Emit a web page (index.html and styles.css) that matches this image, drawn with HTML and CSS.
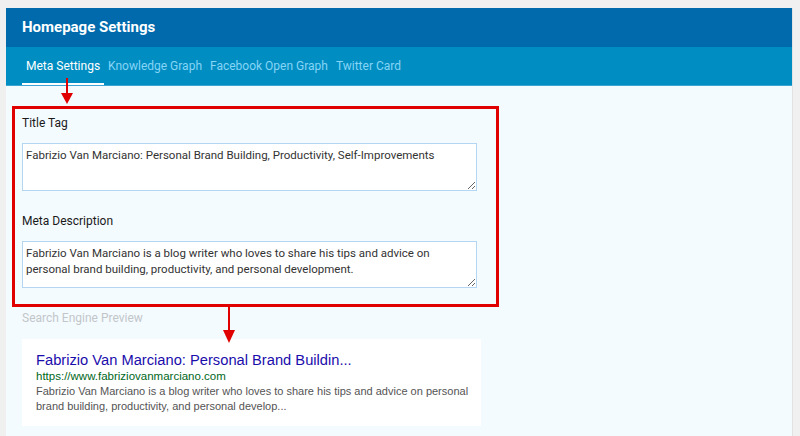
FILE: index.html
```html
<!DOCTYPE html>
<html lang="en">
<head>
    <meta charset="UTF-8">
    <meta name="viewport" content="width=device-width, initial-scale=1.0">
    <title>Homepage Settings</title>
    <link rel="stylesheet" href="styles.css">
</head>
<body>
    <div class="panel">
        <div class="panel-header">Homepage Settings</div>
        <div class="tabs">
            <a class="tab active" href="#">Meta Settings</a>
            <a class="tab" href="#">Knowledge Graph</a>
            <a class="tab" href="#">Facebook Open Graph</a>
            <a class="tab" href="#">Twitter Card</a>
        </div>
        <div class="panel-body">
            <svg class="arrow arrow-tab" width="14" height="28" viewBox="0 0 14 28">
                <line x1="7" y1="0" x2="7" y2="18" stroke="#e00000" stroke-width="2"/>
                <polygon points="1,15 13,15 7,26" fill="#e00000"/>
            </svg>
            <form class="meta-fields">
                <label for="titleTag">Title Tag</label>
                <textarea id="titleTag" class="title-input">Fabrizio Van Marciano: Personal Brand Building, Productivity, Self-Improvements</textarea>
                <label for="metaDesc">Meta Description</label>
                <textarea id="metaDesc" class="desc-input">Fabrizio Van Marciano is a blog writer who loves to share his tips and advice on personal brand building, productivity, and personal development.</textarea>
            </form>
            <svg class="arrow arrow-preview" width="14" height="38" viewBox="0 0 14 38">
                <line x1="7" y1="0" x2="7" y2="28" stroke="#e00000" stroke-width="2"/>
                <polygon points="1,24 13,24 7,37" fill="#e00000"/>
            </svg>
            <div class="preview-label">Search Engine Preview</div>
            <div class="serp">
                <div class="serp-title">Fabrizio Van Marciano: Personal Brand Buildin...</div>
                <div class="serp-url">https://www.fabriziovanmarciano.com</div>
                <div class="serp-desc">Fabrizio Van Marciano is a blog writer who loves to share his tips and advice on personal brand building, productivity, and personal develop...</div>
            </div>
        </div>
    </div>
</body>
</html>
```

FILE: styles.css
```css
body {
    margin: 0;
    padding: 8px 7px 0 6px;
    background-color: #f0f0f0;
    font-family: Roboto, Arial, sans-serif;
    color: #1a1a1a;
    height: 428px;
    overflow: hidden;
}
.panel {
    background-color: #f4fbff;
    height: 100%;
    border-right: 1px solid #e2e2e2;
}
.panel-header {
    background-color: #006aad;
    color: #fff;
    font-size: 15px;
    font-weight: bold;
    height: 39px;
    line-height: 39px;
    padding-left: 16px;
}
.tabs {
    display: flex;
    background-color: #008ec2;
    height: 38px;
    padding-left: 16px;
    border-bottom: 1px solid #3ba4d2;
}
.tab {
    display: block;
    padding: 0 4px;
    font-size: 12px;
    line-height: 39px;
    color: #86d4f6;
    text-decoration: none;
}
.tab.active {
    color: #fff;
    box-shadow: inset 0 -2px 0 #fff;
}
.panel-body {
    position: relative;
    padding: 20px 16px 0;
}
.arrow {
    position: absolute;
}
.arrow-tab {
    left: 54px;
    top: -8px;
}
.arrow-preview {
    left: 216px;
    top: 220px;
}
.meta-fields {
    width: 467px;
    margin-left: -10px;
    padding: 7px 7px 16px;
    border: 3px solid #e00000;
}
label {
    display: block;
    font-size: 12px;
    line-height: 14px;
    margin-bottom: 13px;
}
textarea {
    display: block;
    box-sizing: border-box;
    width: 455px;
    margin: 0 0 23px;
    padding: 3px 10px 3px 3px;
    border: 1px solid #b5d6f2;
    background-color: #fff;
    font-family: Roboto, Arial, sans-serif;
    font-size: 11.5px;
    line-height: 16px;
    color: #333;
    resize: vertical;
}
.title-input {
    height: 48px;
}
.desc-input {
    height: 47px;
    margin-bottom: 0;
}
.preview-label {
    margin-top: 4px;
    font-size: 12px;
    color: #c2c6c9;
    line-height: 14px;
}
.serp {
    margin-top: 14px;
    width: 439px;
    padding: 12px 6px 12px 14px;
    background-color: #fff;
    font-family: "Liberation Sans", Arial, sans-serif;
}
.serp-title {
    font-size: 14.7px;
    line-height: 18px;
    color: #1a0dab;
}
.serp-url {
    font-size: 11.5px;
    line-height: 15px;
    color: #006621;
}
.serp-desc {
    font-size: 11px;
    line-height: 15px;
    color: #545454;
}
```
